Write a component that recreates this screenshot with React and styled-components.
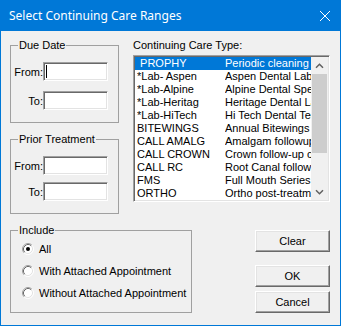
import React from 'react';
import styled, { createGlobalStyle } from 'styled-components';

const GlobalStyle = createGlobalStyle`
  html, body {
    margin: 0;
    padding: 0;
    background: #ffffff;
  }
  body {
    font-family: "Liberation Sans", Arial, sans-serif;
    font-size: 11px;
    color: #000;
  }
`;

const Window = styled.div`
  width: 341px;
  height: 326px;
  box-sizing: border-box;
  background: #0078d7;
  padding: 0 1px 1px 1px;
  display: flex;
  flex-direction: column;
`;

const TitleBar = styled.div`
  height: 31px;
  flex-shrink: 0;
  display: flex;
  align-items: center;
  justify-content: space-between;
  padding: 0 10px 0 8px;
  color: #fff;
  font-family: "Noto Sans", "Open Sans", sans-serif;
  font-size: 12px;
`;

const Body = styled.div`
  flex: 1;
  background: #f0f0f0;
  padding: 8px 10px 0 9px;
  display: flex;
  flex-direction: column;
  gap: 10px;
`;

const Row = styled.div`
  display: flex;
  align-items: flex-start;
  justify-content: ${p => p.$spread ? 'space-between' : 'flex-start'};
  gap: ${p => p.$gap || 0}px;
`;

const Column = styled.div`
  width: ${p => p.$w}px;
  display: flex;
  flex-direction: column;
  gap: ${p => p.$gap || 0}px;
`;

const Group = styled.fieldset`
  margin: 0;
  width: ${p => p.$w}px;
  box-sizing: border-box;
  min-width: 0;
  border: 1px solid #a0a0a0;
  padding: ${p => p.$pt}px 10px 12px 7px;
  ${p => p.$pb !== undefined && `padding-bottom: ${p.$pb}px;`}

  legend {
    padding: 0 1px;
    line-height: 12px;
    font-size: 11px;
  }
`;

const FieldGrid = styled.div`
  display: grid;
  grid-template-columns: 25px 65px;
  row-gap: ${p => p.$gap}px;
  align-items: center;
`;

const Label = styled.label`
  justify-self: end;
  white-space: nowrap;
`;

const TextBox = styled.div`
  height: 19px;
  box-sizing: border-box;
  background: #fff;
  border: 1px solid;
  border-color: #a0a0a0 #fff #fff #a0a0a0;
  box-shadow: inset 1px 1px 0 #696969, inset -1px -1px 0 #e3e3e3;
  display: flex;
  align-items: center;
  padding-left: 2px;

  input {
    flex: 1;
    min-width: 0;
    border: 0;
    outline: 0;
    background: transparent;
    font: inherit;
    padding: 0;
    height: 13px;
  }
`;

const Caret = styled.span`
  width: 1px;
  height: 13px;
  background: #000;
  flex-shrink: 0;
`;

const Caption = styled.div`
  line-height: 13px;
  margin-bottom: 3px;
  white-space: nowrap;
`;

const ListBox = styled.div`
  height: 147px;
  box-sizing: border-box;
  background: #fff;
  border: 1px solid;
  border-color: #a0a0a0 #fff #fff #a0a0a0;
  box-shadow: inset 1px 1px 0 #696969, inset -1px -1px 0 #e3e3e3;
  padding: 1px;
  display: flex;
`;

const Items = styled.div`
  flex: 1;
  min-width: 0;
  overflow: hidden;
`;

const Item = styled.div`
  display: grid;
  grid-template-columns: 88px 1fr;
  height: 13px;
  line-height: 13px;
  padding-left: 2px;
  white-space: pre;
  overflow: hidden;
  background: ${p => p.$selected ? '#0078d7' : 'transparent'};
  color: ${p => p.$selected ? '#fff' : '#000'};

  span {
    overflow: hidden;
  }
`;

const ScrollBar = styled.div`
  width: 17px;
  flex-shrink: 0;
  background: #f0f0f0;
  display: flex;
  flex-direction: column;
`;

const ArrowButton = styled.div`
  height: 17px;
  display: flex;
  align-items: center;
  justify-content: center;
`;

const Thumb = styled.div`
  height: 79px;
  margin: 0 1px;
  background: #cdcdcd;
`;

const Track = styled.div`
  flex: 1;
`;

const RadioList = styled.div`
  display: flex;
  flex-direction: column;
  padding-left: 4px;
`;

const RadioRow = styled.label`
  height: 22px;
  display: flex;
  align-items: center;
  gap: 5px;
  white-space: nowrap;

  svg {
    flex-shrink: 0;
  }
`;

const Button = styled.button`
  width: 75px;
  height: 22px;
  margin-top: ${p => p.$mt || 0}px;
  box-sizing: border-box;
  background: #f0f0f0;
  font-family: "Liberation Sans", Arial, sans-serif;
  font-size: 11px;
  color: #000;
  padding: 0;
  border: 1px solid;
  border-color: #fff #696969 #696969 #fff;
  box-shadow: inset -1px -1px 0 #a0a0a0, inset 1px 1px 0 #e3e3e3;
`;

const careTypes = [
  [' PROPHY', 'Periodic cleaning and exam'],
  ['*Lab- Aspen', 'Aspen Dental Lab'],
  ['*Lab-Alpine', 'Alpine Dental Specialties'],
  ['*Lab-Heritag', 'Heritage Dental Lab'],
  ['*Lab-HiTech', 'Hi Tech Dental Technology'],
  ['BITEWINGS', 'Annual Bitewings'],
  ['CALL AMALG', 'Amalgam followup'],
  ['CALL CROWN', 'Crown follow-up call'],
  ['CALL RC', 'Root Canal follow-up'],
  ['FMS', 'Full Mouth Series'],
  ['ORTHO', 'Ortho post-treatment'],
];

const Chevron = ({ down }) => (
  <svg width="9" height="6" viewBox="0 0 9 6">
    <path
      d={down ? 'M1 1.2 L4.5 4.7 L8 1.2' : 'M1 4.8 L4.5 1.3 L8 4.8'}
      fill="none"
      stroke="#606060"
      strokeWidth="1.5"
    />
  </svg>
);

const Radio = ({ checked }) => (
  <svg width="12" height="12" viewBox="0 0 12 12">
    <circle cx="6" cy="6" r="5" fill="#fff" />
    <path d="M2.11 9.89 A5.5 5.5 0 0 1 9.89 2.11" fill="none" stroke="#a0a0a0" />
    <path d="M9.89 2.11 A5.5 5.5 0 0 1 2.11 9.89" fill="none" stroke="#ffffff" />
    <path d="M2.82 9.18 A4.5 4.5 0 0 1 9.18 2.82" fill="none" stroke="#696969" />
    <path d="M9.18 2.82 A4.5 4.5 0 0 1 2.82 9.18" fill="none" stroke="#e3e3e3" />
    {checked && <circle cx="6" cy="6" r="2" fill="#000" />}
  </svg>
);

const DateFields = ({ gap, focused }) => (
  <FieldGrid $gap={gap}>
    <Label>From:</Label>
    <TextBox>
      {focused && <Caret />}
      <input />
    </TextBox>
    <Label>To:</Label>
    <TextBox>
      <input />
    </TextBox>
  </FieldGrid>
);

const App = () => {
  return (
    <>
      <GlobalStyle />
      <Window>
        <TitleBar>
          <span>Select Continuing Care Ranges</span>
          <svg width="10" height="10" viewBox="0 0 10 10">
            <path d="M0 0 L10 10 M10 0 L0 10" stroke="#fff" strokeWidth="1" />
          </svg>
        </TitleBar>
        <Body>
          <Row $gap={14}>
            <Column $w={109} $gap={10}>
              <Group $w={109} $pt={11}>
                <legend>Due Date</legend>
                <DateFields gap={10} focused />
              </Group>
              <Group $w={109} $pt={11}>
                <legend>Prior Treatment</legend>
                <DateFields gap={7} />
              </Group>
            </Column>
            <Column $w={197}>
              <Caption>Continuing Care Type:</Caption>
              <ListBox>
                <Items>
                  {careTypes.map(([code, desc], i) => (
                    <Item key={code} $selected={i === 0}>
                      <span>{code}</span>
                      <span>{desc}</span>
                    </Item>
                  ))}
                </Items>
                <ScrollBar>
                  <ArrowButton><Chevron /></ArrowButton>
                  <Thumb />
                  <Track />
                  <ArrowButton><Chevron down /></ArrowButton>
                </ScrollBar>
              </ListBox>
            </Column>
          </Row>
          <Row $spread>
            <Group $w={182} $pt={2} $pb={8}>
              <legend>Include</legend>
              <RadioList>
                <RadioRow><Radio checked />All</RadioRow>
                <RadioRow><Radio />With Attached Appointment</RadioRow>
                <RadioRow><Radio />Without Attached Appointment</RadioRow>
              </RadioList>
            </Group>
            <Column $w={75}>
              <Button $mt={6}>Clear</Button>
              <Button $mt={13}>OK</Button>
              <Button $mt={4}>Cancel</Button>
            </Column>
          </Row>
        </Body>
      </Window>
    </>
  );
};

export default App;
